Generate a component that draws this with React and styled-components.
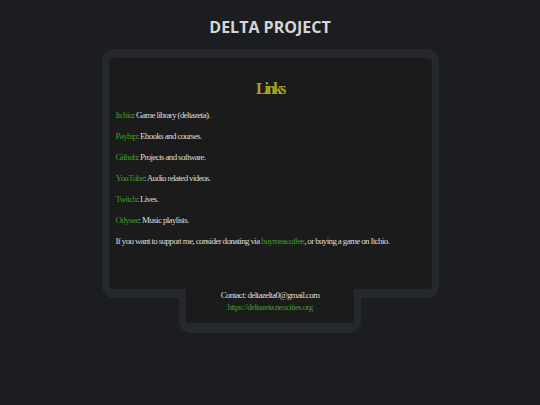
import styled, { createGlobalStyle } from "styled-components";

const GlobalStyle = createGlobalStyle`
  html, body {
    margin: 0;
    padding: 0;
    background: #1c1d21;
  }
`;

const links = [
  { name: "Itchio", text: "Game library (deltazeta)." },
  { name: "Payhip", text: "Ebooks and courses." },
  { name: "Github", text: "Projects and software." },
  { name: "YouTube", text: "Audio related videos." },
  { name: "Twitch", text: "Lives." },
  { name: "Odysee", text: "Music playlists." },
];

const App = () => {
  return (
    <>
      <GlobalStyle />
      <Page>
        <Title>DELTA PROJECT</Title>
        <Card>
          <Main>
            <Heading>Links</Heading>
            {links.map((l) => (
              <Line key={l.name}>
                <Link href="#">{l.name}</Link>: {l.text}
              </Line>
            ))}
            <Line>
              If you want to support me, consider donating via{" "}
              <Link href="#">buymeacoffee</Link>, or buying a game on Itchio.
            </Line>
          </Main>
          <Footer>
            <span>Contact: deltazelta0@gmail.com</span>
            <Link href="#">https://deltazeta.neocities.org</Link>
          </Footer>
        </Card>
      </Page>
    </>
  );
};

const Page = styled.div`
  width: 540px;
  min-height: 405px;
  display: flex;
  flex-direction: column;
  align-items: center;
  padding-top: 15px;
  box-sizing: border-box;
`;

const Title = styled.h1`
  margin: 0 0 10px;
  font-family: "Open Sans", "DejaVu Sans", sans-serif;
  font-weight: 700;
  font-size: 16px;
  line-height: 24px;
  color: #d6d6d6;
`;

const Card = styled.div`
  display: flex;
  flex-direction: column;
  align-items: center;
  font-family: "Liberation Serif", "Times New Roman", serif;
`;

const Main = styled.div`
  width: 337px;
  height: 249px;
  box-sizing: border-box;
  border: 7px solid #25282c;
  border-top-width: 9px;
  border-bottom-width: 9px;
  border-radius: 12px;
  background: #1b1b1b;
  padding: 21px 7px 0;
`;

const Heading = styled.h2`
  margin: 0 0 6px;
  text-align: center;
  font-size: 16px;
  line-height: 20px;
  font-weight: 700;
  color: #a6a61c;
  letter-spacing: -2.2px;
`;

const Line = styled.p`
  margin: 0;
  font-size: 9px;
  line-height: 21px;
  color: #dcdcdc;
  letter-spacing: -0.65px;
`;

const Link = styled.a`
  color: #3f9a2b;
  text-decoration: none;
`;

const Footer = styled.div`
  position: relative;
  margin-top: -9px;
  width: 182px;
  box-sizing: border-box;
  border: 7px solid #25282c;
  border-top: 0;
  border-bottom-width: 10px;
  border-radius: 0 0 12px 12px;
  background: #1b1b1b;
  padding: 0 0 10px;
  display: flex;
  flex-direction: column;
  align-items: center;
  font-size: 9px;
  line-height: 12px;
  letter-spacing: -0.65px;
  color: #dcdcdc;
`;

export default App;
